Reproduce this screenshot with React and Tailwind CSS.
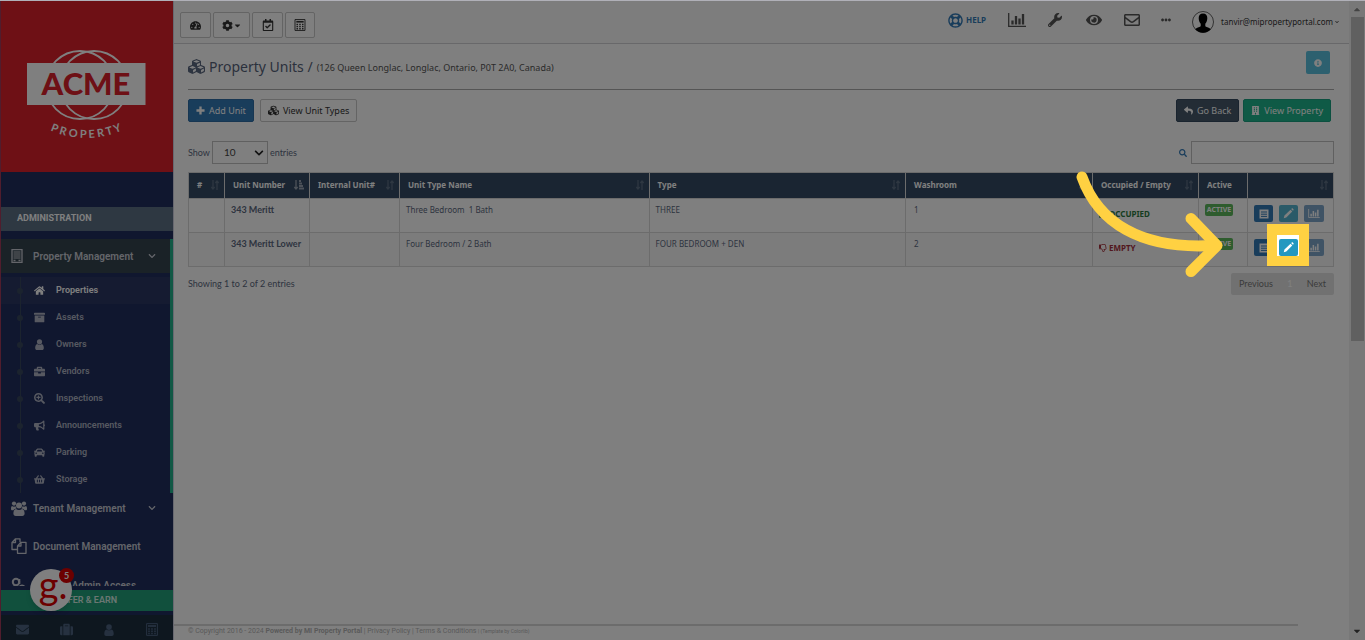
import React from 'react';
import {
    FaTachometerAlt, FaCog, FaCaretDown, FaRegCalendarCheck, FaCubes, FaReply, FaBuilding,
    FaInfoCircle, FaHome, FaArchive, FaBriefcase, FaSearchPlus, FaBullhorn, FaCar, FaShoppingBasket,
    FaChevronDown, FaEnvelope, FaSuitcase, FaWrench, FaEye, FaRegEnvelope,
    FaEllipsisH, FaSearch, FaRegThumbsDown, FaRegThumbsUp, FaRegLifeRing,
} from 'react-icons/fa';

const BuildingIcon = ({ className }) => (
    <svg viewBox="0 0 12 14" className={className} fill="none" stroke="currentColor">
        <path d="M1 .7h10v12.6H1z" strokeWidth="1.3" />
        <path d="M2.5 3h7M2.5 5h7M2.5 7h7M2.5 9h7" />
        <path d="M2.5 11.5h2M7.5 11.5h2" strokeWidth="1.3" />
    </svg>
);

const CalculatorIcon = ({ className }) => (
    <svg viewBox="0 0 12 13" className={className} fill="none" stroke="currentColor">
        <path d="M.6.6h10.8v11.8H.6z" />
        <path d="M2 3h8" strokeWidth="1.8" />
        <path d="M2.2 6h1.6M5.2 6h1.6M8.2 6h1.6M2.2 8.3h1.6M5.2 8.3h1.6M8.2 8.3h1.6M2.2 10.6h1.6M5.2 10.6h1.6M8.2 10.6h1.6" strokeWidth="1.5" />
    </svg>
);

const PersonIcon = ({ className }) => (
    <svg viewBox="0 0 12 14" className={className} fill="currentColor">
        <circle cx="6" cy="3.6" r="3.3" />
        <path d="M3.2 6.3C1.2 6.8.5 9 .5 11.4.5 13 1.4 14 2.7 14h6.6c1.3 0 2.2-1 2.2-2.6 0-2.4-.7-4.6-2.7-5.1-1.5 1.5-4.1 1.5-5.6 0z" />
    </svg>
);

const PeopleIcon = ({ className }) => (
    <svg viewBox="0 0 16 15" className={className} fill="currentColor">
        <circle cx="3" cy="2.6" r="2.1" />
        <circle cx="13" cy="2.6" r="2.1" />
        <circle cx="8" cy="4.6" r="3" />
        <path d="M1 5c1.2.9 2.4.9 3.6.3.1 1 .5 1.7 1 2.3C4 7.8 3 8.5 2.5 9.2H1.3C.5 9.2 0 8.7 0 7.9 0 6.6.2 5.4 1 5zM15 5c-1.2.9-2.4.9-3.6.3-.1 1-.5 1.7-1 2.3 1.6.2 2.6.9 3.1 1.6h1.2c.8 0 1.3-.5 1.3-1.3 0-1.3-.2-2.5-1-2.9z" />
        <path d="M5 8c-1.9.3-2.6 2.3-2.6 4.6C2.4 14.1 3.3 15 4.7 15h6.6c1.4 0 2.3-.9 2.3-2.4 0-2.3-.7-4.3-2.6-4.6-1.8 1.4-4.2 1.4-6 0z" />
    </svg>
);

const CopyIcon = ({ className }) => (
    <svg viewBox="0 0 16 16" className={className} fill="none" stroke="currentColor" strokeWidth="1.3" strokeLinejoin="round">
        <path d="M6 11.5H1V4.5l3.5-3.7H9v3.5M4.5.8v3.7H1" />
        <path d="M6.5 8 10 4.3h5v11H6.5zM10 4.3V8H6.5" />
    </svg>
);

const AdminIcon = ({ className }) => (
    <svg viewBox="0 0 16 16" className={className} fill="none" stroke="currentColor" strokeWidth="2">
        <circle cx="5" cy="5" r="3.2" />
        <path d="M8.3 2v5M1 13c.5-3 2-4 4-4M9 9.5h4" />
        <circle cx="11" cy="11" r="2.5" />
    </svg>
);

const PlusIcon = ({ className }) => (
    <svg viewBox="0 0 10 10" className={className} fill="none" stroke="currentColor" strokeWidth="2.6">
        <path d="M5 .5v9M.5 5h9" />
    </svg>
);

const PencilIcon = ({ className }) => (
    <svg viewBox="0 0 12 12" className={className} fill="currentColor">
        <path d="M.8 11.2 1.6 8.3 8.2 1.9l1.9 1.9-6.5 6.5zM8.9 1.2l.7-.6c.4-.4.8-.3 1.1 0l.7.7c.3.3.4.7 0 1.1l-.6.7z" />
    </svg>
);

const ListIcon = ({ className }) => (
    <svg viewBox="0 0 10 10" className={className}>
        <path d="M.5.5h9v9h-9z" fill="currentColor" />
        <path d="M2 3h6M2 5.2h6M2 7.4h6" stroke="#337ab7" strokeWidth="1" />
    </svg>
);

const BarsIcon = ({ className }) => (
    <svg viewBox="0 0 18 14" className={className} fill="none" stroke="currentColor">
        <path d="M.7 0v13.3H18" strokeWidth="1.3" />
        <path d="M4.5 11.5V7.5M8 11.5V3M11.5 11.5V5.5M15 11.5V1" strokeWidth="2.3" />
    </svg>
);

const SortIcon = () => (
    <svg viewBox="0 0 8 10" className="h-[10px] w-2 shrink-0 text-white/20" fill="none" stroke="currentColor">
        <path d="M2 0v9M.3 7 2 9l1.7-2M6 10V1M4.3 3 6 1l1.7 2" strokeWidth="1.3" />
    </svg>
);

const SortedIcon = () => (
    <svg viewBox="0 0 10 10" className="h-[10px] w-[10px] shrink-0 text-white/50" fill="none" stroke="currentColor">
        <path d="M2 0v9M.3 7 2 9l1.7-2" strokeWidth="1.3" />
        <path d="M5 1h2M5 3.5h3M5 6h4M5 8.5h5" strokeWidth="1.8" />
    </svg>
);

const Logo = () => (
    <svg viewBox="0 0 172 171" className="block w-full bg-[#dc202a]">
        <g fill="none" stroke="#fff" strokeWidth="1.8">
            <circle cx="79" cy="84" r="34" />
            <circle cx="93" cy="84" r="34" />
        </g>
        <path d="M26 62h118.500v42H26z" fill="#fff" />
        <text x="85" y="94" textAnchor="middle" fontFamily="Lato, sans-serif" fontWeight="900" fontSize="31" fill="#dc202a">ACME</text>
        <path id="logo-arc" d="M44 127Q85 147 126 127" fill="none" />
        <text fontFamily="Lato, sans-serif" fontWeight="700" fontSize="11" fill="#fff" textAnchor="middle">
            <textPath href="#logo-arc" startOffset="50%">P R O P E R T Y</textPath>
        </text>
    </svg>
);

const subMenu = [
    { label: 'Properties', Icon: FaHome, active: true },
    { label: 'Assets', Icon: FaArchive },
    { label: 'Owners', Icon: PersonIcon },
    { label: 'Vendors', Icon: FaBriefcase },
    { label: 'Inspections', Icon: FaSearchPlus },
    { label: 'Announcements', Icon: FaBullhorn },
    { label: 'Parking', Icon: FaCar },
    { label: 'Storage', Icon: FaShoppingBasket },
];

const Sidebar = () => (
    <aside className="relative flex h-full w-[173px] shrink-0 flex-col border-l border-[#a03a5a] bg-[#202e5e] font-['Roboto',sans-serif] text-[10px] font-semibold text-[#c8cbd4]">
        <Logo />
        <div className="mt-[35px] flex h-6 shrink-0 items-center bg-[#5c7085] pl-4 text-[9px] font-bold text-white">ADMINISTRATION</div>
        <nav className="mt-2 min-h-0 flex-1 overflow-hidden">
            <div className="border-r-3 border-[#22b08a]">
                <a href="#property" className="flex h-[34px] items-center bg-[#34444f] pr-[14px] pl-[10px]">
                    <BuildingIcon className="h-[14px] w-3" />
                    <span className="ml-[10px] flex-1">Property Management</span>
                    <FaChevronDown className="h-2 w-2" />
                </a>
                <ul className="relative mt-1 text-[9px]">
                    <li aria-hidden="true" className="absolute top-0 bottom-0 left-[19px] w-px bg-[#37475c]" />
                    {subMenu.map(({ label, Icon, active }) => (
                        <li key={label} className={active ? 'bg-[#2b3763] text-white' : 'text-[#aeb3c2]'}>
                            <a href="#sub" className="relative flex h-[27px] items-center pl-4">
                                <span className="h-[6px] w-[6px] rounded-full bg-[#37475c]" />
                                <Icon className="ml-[11px] h-[11px] w-[11px]" />
                                <span className="ml-[11px]">{label}</span>
                            </a>
                        </li>
                    ))}
                </ul>
            </div>
            <a href="#tenant" className="flex h-[30px] items-center pr-[17px] pl-[10px]">
                <PeopleIcon className="h-[15px] w-4" />
                <span className="ml-[6px] flex-1">Tenant Management</span>
                <FaChevronDown className="h-2 w-2" />
            </a>
            <a href="#documents" className="mt-[7px] flex h-8 items-center pl-[10px]">
                <CopyIcon className="h-4 w-4" />
                <span className="ml-[6px]">Document Management</span>
            </a>
            <a href="#admin" className="mt-[7px] flex h-8 items-center pl-[10px]">
                <AdminIcon className="h-4 w-4" />
                <span className="ml-[6px]">Manage Admin Access</span>
            </a>
        </nav>
        <a href="#refer" className="mt-1 flex h-[21px] shrink-0 items-center justify-center bg-[#22a07a] text-[9px] text-[#d5eee5]">REFER &amp; EARN</a>
        <div className="mt-1 flex h-[25px] shrink-0 items-center justify-around bg-[#1c2f3f] pt-1 text-[#4c6280]">
            <FaEnvelope className="h-[13px] w-[13px]" />
            <FaSuitcase className="h-[13px] w-[13px]" />
            <PersonIcon className="h-3 w-3" />
            <CalculatorIcon className="h-[13px] w-3" />
        </div>
        <button className="absolute bottom-[29px] left-[29px] flex h-[42px] w-[42px] items-center justify-center rounded-full bg-white pb-3 pl-1 font-['Lato',sans-serif] text-[38px] leading-none font-normal text-[#d80000] shadow-md">
            g.
            <span className="absolute -top-px -right-[2px] flex h-[15px] w-[15px] items-center justify-center rounded-full bg-[#d80000] text-[9px] font-bold text-white">5</span>
        </button>
    </aside>
);

const toolButton = 'flex h-[26px] items-center justify-center rounded-xs border border-[#c8c8c8] bg-white text-[#333]';

const TopBar = () => (
    <header className="flex h-[43px] items-center border-b border-[#d0d0d4] bg-[#fafafa] pr-[10px] pl-[6px] text-[#555]">
        <div className="flex gap-[2px] pt-[6px]">
            <button aria-label="Dashboard" className={`${toolButton} w-[31px]`}><FaTachometerAlt className="h-[11px] w-[11px]" /></button>
            <button aria-label="Settings" className={`${toolButton} w-[37px]`}><FaCog className="h-[11px] w-[11px]" /><FaCaretDown className="h-[9px] w-[9px]" /></button>
            <button aria-label="Calendar" className={`${toolButton} w-[31px]`}><FaRegCalendarCheck className="h-3 w-3" /></button>
            <button aria-label="Calculator" className={`${toolButton} w-[30px]`}><CalculatorIcon className="h-3 w-3" /></button>
        </div>
        <div className="ml-auto flex items-center pb-1">
            <a href="#help" className="flex items-center gap-[3px] text-[8px] font-bold text-[#337ab7]">
                <FaRegLifeRing className="h-[15px] w-[15px]" />HELP
            </a>
            <BarsIcon className="ml-[22px] h-[14px] w-[18px]" />
            <FaWrench className="ml-[22px] h-[14px] w-[14px]" />
            <FaEye className="ml-6 h-4 w-4" />
            <FaRegEnvelope className="ml-[22px] h-4 w-4" />
            <FaEllipsisH className="ml-[21px] h-[10px] w-[10px]" />
            <button className="ml-[21px] flex items-center pt-1 text-[8px] text-[#333]">
                <svg viewBox="0 0 22 22" className="mr-[7px] h-[22px] w-[22px]">
                    <circle cx="11" cy="11" r="10.5" fill="#fff" stroke="#222" strokeWidth=".7" />
                    <path d="M11 2.5c3 0 4.4 2 4.3 4.7-.1 2.4-.9 4.4-2 5.6v2.5c1.5 1.3 4.2 1.2 5.5 3A10.5 10.5 0 0 1 3.2 18.3c1.3-1.8 4-1.7 5.5-3v-2.5c-1.1-1.2-1.9-3.2-2-5.6C6.6 4.5 8 2.5 11 2.5z" fill="#000" />
                </svg>
                tanvir@mipropertyportal.com
                <FaChevronDown className="ml-[2px] h-1 w-1" />
            </button>
        </div>
    </header>
);

const columns = [
    { label: '#', width: 'w-9' },
    { label: 'Unit Number', width: 'w-[85px]', sorted: true },
    { label: 'Internal Unit#', width: 'w-[90px]' },
    { label: 'Unit Type Name', width: 'w-[21.8%]' },
    { label: 'Type', width: 'w-[22.4%]' },
    { label: 'Washroom', width: '' },
    { label: 'Occupied / Empty', width: 'w-[106px]' },
    { label: 'Active', width: 'w-[49px]', noSort: true },
    { label: '', width: 'w-[86px]' },
];

const units = [
    { name: '343 Meritt', typeName: 'Three Bedroom  1 Bath', type: 'THREE', wash: '1', occupied: true },
    { name: '343 Meritt Lower', typeName: 'Four Bedroom / 2 Bath', type: 'FOUR BEDROOM + DEN', wash: '2', highlight: true },
];

const actionButton = 'flex h-[17px] items-center justify-center rounded-xs text-white';
const cell = 'border border-[#d8d8d8] px-[6px] pt-[5px]';

const EditButton = ({ highlight }) => (
    <div className={highlight ? 'relative z-50' : ''}>
        {highlight && <span className="absolute -top-[15px] -left-3 h-[42px] w-[42px] border-x-10 border-t-11 border-b-10 border-[#ffd142] bg-white" />}
        <button aria-label="Edit" className={`${actionButton} relative w-[19px] ${highlight ? 'bg-[#2398c0]' : 'bg-[#55b5d0]'}`}>
            <PencilIcon className="h-[11px] w-[11px]" />
        </button>
    </div>
);

const UnitsTable = () => (
    <table className="mt-2 w-full table-fixed border-collapse border border-[#d8d8d8] text-left text-[8px] leading-3 text-[#5b6880]">
        <thead>
            <tr className="h-[26px] border-b border-black bg-[#344a64] text-white">
                {columns.map(({ label, width, sorted, noSort }) => (
                    <th key={label} className={`${width} border-x border-[#d8d8d8] pr-[5px] pb-[2px] pl-2 font-bold whitespace-nowrap`}>
                        <div className="flex items-center justify-between">
                            <span>{label}</span>
                            {sorted ? <SortedIcon /> : !noSort && <SortIcon />}
                        </div>
                    </th>
                ))}
            </tr>
        </thead>
        <tbody>
            {units.map((u) => (
                <tr key={u.name} className={`h-[34px] align-top whitespace-nowrap ${u.highlight ? 'bg-[#f9f9f9]' : ''}`}>
                    <td className={cell} />
                    <td className={`${cell} font-['Lato',sans-serif] text-[9px] font-bold`}>{u.name}</td>
                    <td className={cell} />
                    <td className={`${cell} whitespace-pre`}>{u.typeName}</td>
                    <td className={cell}>{u.type}</td>
                    <td className={`${cell} pl-2`}>{u.wash}</td>
                    <td className={`${cell} pt-[9px] font-bold`}>
                        {u.occupied
                            ? <span className="flex items-center gap-[2px] text-[#2d7a3e]"><FaRegThumbsUp className="h-2 w-2" />OCCUPIED</span>
                            : <span className="flex items-center gap-[2px] text-[#a5303c]"><FaRegThumbsDown className="h-2 w-2" />EMPTY</span>}
                    </td>
                    <td className={cell}>
                        <span className="flex h-3 w-[28px] items-center justify-center rounded-xs bg-[#5cb85c] text-[7px] font-bold text-white">ACTIVE</span>
                    </td>
                    <td className={cell}>
                        <div className="flex gap-[6px] pt-px">
                            <button aria-label="Details" className={`${actionButton} w-[19px] bg-[#337ab7]`}><ListIcon className="h-[10px] w-[10px]" /></button>
                            <EditButton highlight={u.highlight} />
                            <button aria-label="Report" className={`${actionButton} w-5 bg-[#7ea6cb]`}><BarsIcon className="h-[9px] w-3" /></button>
                        </div>
                    </td>
                </tr>
            ))}
        </tbody>
    </table>
);

const wideButton = 'flex h-[23px] items-center gap-1 rounded-xs border px-[7px] text-[9px]';

const UnitsPage = () => (
    <main className="flex-1 pr-[15px] pl-[14px]">
        <div className="flex h-[46px] items-center border-b border-[#aaa]">
            <FaCubes className="h-[17px] w-[17px] text-[#5b6880]" />
            <h1 className="ml-1 text-[14px] text-[#56627a]">Property Units /</h1>
            <span className="ml-1 pt-[2px] text-[9px] text-[#555]">(126 Queen Longlac, Longlac, Ontario, P0T 2A0, Canada)</span>
            <button aria-label="Info" className="mr-1 mb-2 ml-auto flex h-[23px] w-6 items-center justify-center rounded-xs bg-[#5bc0de] text-white">
                <FaInfoCircle className="h-2 w-2" />
            </button>
        </div>
        <div className="mt-[9px] flex gap-[6px]">
            <button className={`${wideButton} border-[#2e6da4] bg-[#337ab7] text-white`}><PlusIcon className="h-[9px] w-[9px]" />Add Unit</button>
            <button className={`${wideButton} border-[#c8c8c8] bg-white text-[#333]`}><FaCubes className="h-[11px] w-[11px]" />View Unit Types</button>
            <div className="mr-[3px] ml-auto flex gap-1">
                <button className={`${wideButton} border-[#34495e] bg-[#46586a] text-white`}><FaReply className="h-[9px] w-[9px]" />Go Back</button>
                <button className={`${wideButton} border-[#18a080] bg-[#1fb58c] text-white`}><FaBuilding className="h-[9px] w-[9px]" />View Property</button>
            </div>
        </div>
        <div className="mt-[19px] flex items-center font-['Lato',sans-serif] text-[9px] text-[#5b6880]">
            <label className="flex items-center gap-[2px]">
                Show
                <span className="relative">
                    <select className="block h-[23px] w-14 appearance-none border border-[#c0c0c0] bg-white pl-[11px] text-[10px] text-[#444]">
                        <option>10</option>
                    </select>
                    <FaChevronDown className="pointer-events-none absolute top-[7px] right-1 h-[10px] w-[10px] text-[#222]" />
                </span>
                entries
            </label>
            <label className="ml-auto flex items-center gap-1">
                <FaSearch className="h-2 w-2 text-[#337ab7]" />
                <input type="text" aria-label="Search" className="h-[23px] w-[143px] border border-[#c0c0c0] bg-white" />
            </label>
        </div>
        <UnitsTable />
        <div className="mt-[6px] flex items-start justify-between font-['Lato',sans-serif] text-[9px] text-[#5b6880]">
            <span className="pt-1">Showing 1 to 2 of 2 entries</span>
            <div className="flex h-[22px] w-[103px] items-center justify-between rounded-xs bg-[#e3e3e3] px-2 text-[#777]">
                <button>Previous</button>
                <button className="text-[#fff]">1</button>
                <button>Next</button>
            </div>
        </div>
    </main>
);

const App = () => (
    <div className="relative flex h-screen overflow-hidden border-t border-[#b0b0b8] bg-white font-['Noto_Sans',sans-serif]">
        <Sidebar />
        <div className="flex min-w-0 flex-1 flex-col border-l border-[#d0d0e0]">
            <TopBar />
            <UnitsPage />
            <footer className="mr-[51px] h-4 border-t-2 border-[#d8d8d8] pl-[14px] font-['Roboto',sans-serif] text-[7px] leading-[10px] text-[#b4b4b4]">
                © Copyright 2016 - 2024 <b>Powered by MI Property Portal</b> | Privacy Policy | Terms &amp; Conditions <span className="text-[5px]">| (Template by Colorlib)</span>
            </footer>
        </div>
        <div className="flex w-4 shrink-0 flex-col items-center bg-[#f1f1f1] text-[#444]">
            <FaCaretDown className="mt-1 h-[10px] w-[10px] shrink-0 rotate-180 text-[#888]" />
            <div className="mt-[2px] h-[324px] w-[13px] bg-[#c1c1c1]" />
            <FaCaretDown className="mt-auto mb-1 h-[10px] w-[10px]" />
        </div>
        <div className="pointer-events-none absolute inset-0 z-40 bg-black/50" />
        <svg viewBox="1070 165 160 120" className="pointer-events-none absolute top-[164px] right-[135px] z-50 h-[120px] w-40" fill="none" stroke="#ffd142" strokeWidth="11" strokeLinecap="round" strokeLinejoin="round">
            <path d="M1082 177C1098 222 1140 250 1214 245.500" />
            <path d="M1191 218.500 1217 245.500 1191 271.500" />
        </svg>
    </div>
);

export default App;
